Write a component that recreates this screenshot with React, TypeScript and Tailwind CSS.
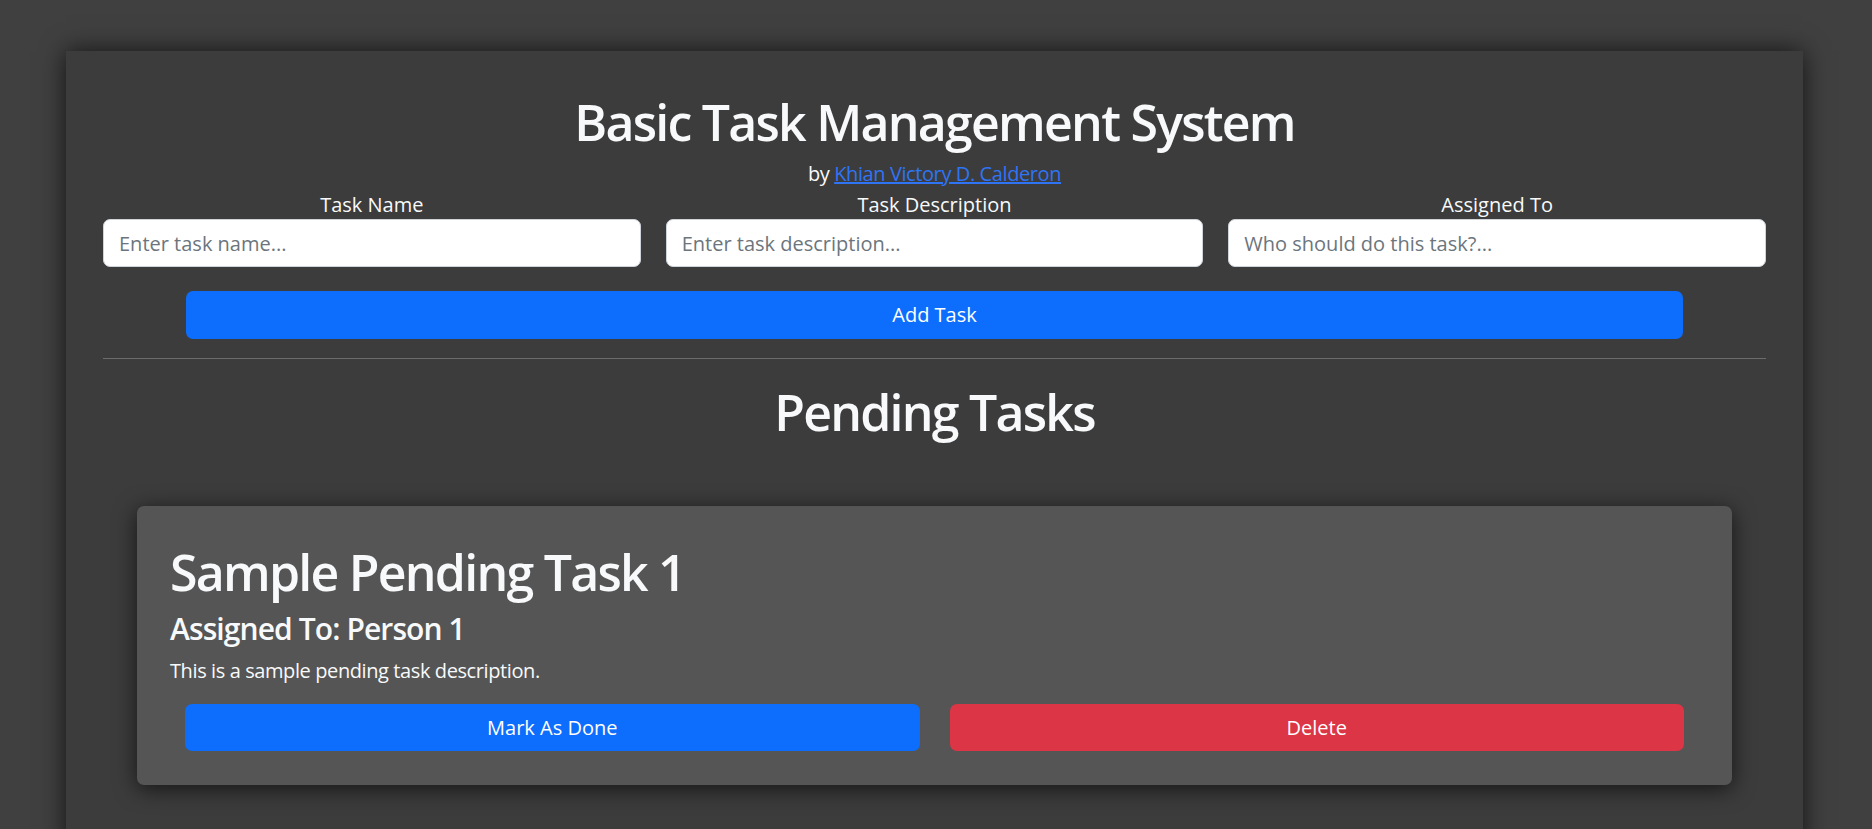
import React from 'react'

const font = { fontFamily: '"Open Sans", "Noto Sans", sans-serif' }

function Field({ label, placeholder }: { label: string; placeholder: string }) {
  return (
    <div className="flex flex-col items-center">
      <label className="text-[20px] leading-[28px] text-[#f8f9fa]">{label}</label>
      <input
        className="w-full h-[48px] px-[15px] bg-white border border-[#ced4da] rounded-[7px] text-[20px] text-[#212529] placeholder:text-[#6c757d] outline-none"
        placeholder={placeholder}
      />
    </div>
  )
}

function TaskCard() {
  return (
    <div className="mx-[34px] mt-[64px] bg-[#555555] rounded-[7px] px-[33px] pt-[36px] pb-[34px] shadow-[0_4px_22px_rgba(0,0,0,0.65)]">
      <h1 className="text-[50px] leading-[60px] font-semibold text-[#f8f9fa] tracking-[-0.035em]">
        Sample Pending Task 1
      </h1>
      <h4 className="mt-[9px] text-[30px] leading-[36px] font-semibold text-[#f8f9fa] tracking-[-0.03em]">
        Assigned To: Person 1
      </h4>
      <p className="mt-[9px] text-[20px] leading-[30px] text-[#f8f9fa] tracking-[-0.02em]">
        This is a sample pending task description.
      </p>
      <div className="mt-[18px] px-[15px] grid grid-cols-2 gap-[30px]">
        <button className="h-[47px] rounded-[7px] bg-[#0d6efd] text-white text-[20px]">
          Mark As Done
        </button>
        <button className="h-[47px] rounded-[7px] bg-[#dc3545] text-white text-[20px]">
          Delete
        </button>
      </div>
    </div>
  )
}

export default function App() {
  return (
    <div className="min-h-screen bg-[#404040] pt-[51px]" style={font}>
      <div className="ml-[66px] w-[1737px] min-h-[800px] bg-[#3c3c3c] px-[37px] pt-[41px] shadow-[0_0_24px_rgba(0,0,0,0.7)]">
        <h1 className="text-center text-[50px] leading-[60px] font-semibold text-[#f8f9fa] tracking-[-0.035em]">
          Basic Task Management System
        </h1>
        <p className="mt-[7px] text-center text-[20px] leading-[30px] text-[#f8f9fa] tracking-[-0.02em]">
          by{' '}
          <a href="#" className="text-[#2f74f5] underline">
            Khian Victory D. Calderon
          </a>
        </p>
        <div className="mt-[2px] grid grid-cols-3 gap-[25px]">
          <Field label="Task Name" placeholder="Enter task name..." />
          <Field label="Task Description" placeholder="Enter task description..." />
          <Field label="Assigned To" placeholder="Who should do this task?..." />
        </div>
        <div className="mt-[24px] flex justify-center">
          <button className="w-[90%] h-[48px] rounded-[7px] bg-[#0d6efd] text-white text-[20px]">
            Add Task
          </button>
        </div>
        <hr className="mt-[19px] border-t border-[#6b6b6b]" />
        <h1 className="mt-[23px] text-center text-[50px] leading-[60px] font-semibold text-[#f8f9fa] tracking-[-0.035em]">
          Pending Tasks
        </h1>
        <TaskCard />
      </div>
    </div>
  )
}
